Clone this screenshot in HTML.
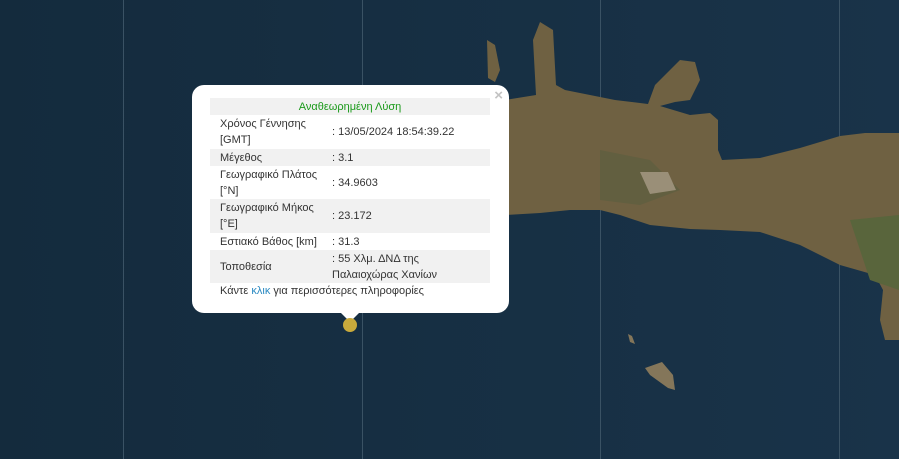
<!DOCTYPE html>
<html><head><meta charset="utf-8"><style>
body{margin:0;width:899px;height:459px;overflow:hidden;background:#152b3e;font-family:"Liberation Sans",sans-serif;position:relative}
.pop{position:absolute;left:192px;top:85px;width:317px;height:228px;background:#fff;border-radius:12px;}
.tip{position:absolute;left:340px;top:312px;width:0;height:0;border-left:10px solid transparent;border-right:10px solid transparent;border-top:10px solid #fff}
.x{position:absolute;right:6px;top:2px;color:#c3c3c3;font-size:15px;font-weight:bold}
table{position:absolute;left:18px;top:13px;width:280px;border-collapse:collapse;font-size:11px;color:#333;table-layout:fixed}
td{padding:0 0 0 10px;line-height:16px;vertical-align:middle}
tr.g td{background:#f1f1f1}
.h td{text-align:center;color:#1a9a1a;height:17px;padding:0}
td.v{padding-left:2px}
.f{position:absolute;left:28px;top:200px;font-size:11px;color:#333}
.f a{color:#2b8ac2;text-decoration:none}
.dot{position:absolute;left:343px;top:318px;width:14px;height:14px;border-radius:50%;background:#c9aa3c}
</style></head><body>
<svg width="899" height="459" style="position:absolute;left:0;top:0">
<defs><linearGradient id="s" x1="0" x2="1"><stop offset="0" stop-color="#142b3d"/><stop offset="1" stop-color="#193349"/></linearGradient></defs>
<rect width="899" height="459" fill="url(#s)"/>
<g stroke="#3a5264" stroke-width="1"><line x1="123.5" y1="0" x2="123.5" y2="459"/><line x1="362.5" y1="0" x2="362.5" y2="459"/><line x1="600.5" y1="0" x2="600.5" y2="459"/><line x1="839.5" y1="0" x2="839.5" y2="459"/></g>
<path d="M505,100 L536,95 L533,40 L540,22 L553,30 L556,85 L565,90 L590,95 L615,100 L648,104 L655,85 L665,75 L680,60 L695,62 L700,80 L690,100 L675,102 L660,106 L690,115 L710,113 L718,120 L718,150 L722,160 L760,158 L800,148 L840,136 L865,133 L899,133 L899,340 L885,340 L880,320 L883,290 L875,275 L840,265 L800,245 L760,232 L720,230 L690,229 L650,225 L620,215 L600,210 L570,210 L540,213 L505,215 Z" fill="#6f6142"/>
<path d="M600,150 L650,160 L680,190 L640,205 L600,200 Z" fill="#625f40"/>
<path d="M640,172 L668,172 L676,190 L650,194 Z" fill="#9a8f78"/>
<path d="M850,220 L899,215 L899,290 L870,280 Z" fill="#59653c"/>
<path d="M487,40 L495,45 L500,70 L495,82 L488,78 Z" fill="#6f6142"/>
<path d="M645,368 L662,362 L673,375 L675,390 L668,388 L650,375 Z" fill="#84765a"/>
<path d="M628,334 L632,336 L635,344 L630,342 Z" fill="#84765a"/>
</svg>
<div class="pop"><span class="x">×</span>
<table>
<colgroup><col style="width:120px"><col style="width:160px"></colgroup>
<tr class="g h"><td colspan="2">Αναθεωρημένη Λύση</td></tr>
<tr style="height:34px"><td>Χρόνος Γέννησης<br>[GMT]</td><td class="v">: 13/05/2024 18:54:39.22</td></tr>
<tr class="g" style="height:17px"><td>Μέγεθος</td><td class="v">: 3.1</td></tr>
<tr style="height:33px"><td>Γεωγραφικό Πλάτος<br>[°N]</td><td class="v">: 34.9603</td></tr>
<tr class="g" style="height:34px"><td>Γεωγραφικό Μήκος<br>[°E]</td><td class="v">: 23.172</td></tr>
<tr style="height:17px"><td>Εστιακό Βάθος [km]</td><td class="v">: 31.3</td></tr>
<tr class="g" style="height:33px"><td>Τοποθεσία</td><td class="v">: 55 Χλμ. ΔΝΔ της<br>Παλαιοχώρας Χανίων</td></tr>
</table>
<div class="f">Κάντε <a>κλικ</a> για περισσότερες πληροφορίες</div>
</div>
<div class="tip"></div>
<div class="dot"></div>
</body></html>
